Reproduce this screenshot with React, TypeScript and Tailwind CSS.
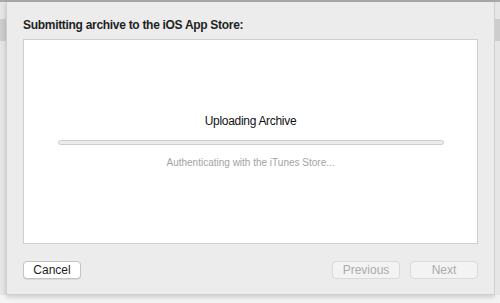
import React from 'react';

const font = { fontFamily: '"Liberation Sans", Arial, sans-serif' };

const SideStrip = ({ width }: { width: string }) => (
  <div className={`flex ${width} flex-col bg-[#e6e6e6]`}>
    <div className="h-[17px]" />
    <div className="h-[22px] bg-[#cdcdcd]" />
  </div>
);

const SheetButton = ({ label, disabled, width }: { label: string; disabled?: boolean; width: string }) => (
  <button
    className={`${width} h-[18px] rounded-[4px] border text-[12px] leading-[16px] ${
      disabled ? 'border-[#dadada] bg-[#f3f3f3] text-[#ababab]' : 'border-[#c3c3c3] bg-white text-[#1e1e1e] shadow-[0_0.5px_0.5px_rgba(0,0,0,0.15)]'
    }`}
  >
    {label}
  </button>
);

export default function App() {
  return (
    <div className="flex h-[303px] w-[500px] flex-col overflow-hidden bg-[#f4f4f4]" style={font}>
      <div className="h-[2px] bg-[#a9a9a9]" />
      <div className="flex">
        <SideStrip width="w-[6px]" />
        <div className="flex h-[293px] flex-1 flex-col border-x border-b border-[#cfcfcf] bg-[#ececec] px-[16px] shadow-[0_2px_5px_rgba(0,0,0,0.18)]">
          <div className="pt-[16px] text-[12px] font-bold leading-[15px] tracking-[-0.3px] text-[#1f1f1f]">
            Submitting archive to the iOS App Store:
          </div>
          <div className="mt-[6px] flex h-[205px] flex-col items-center border border-[#cfcfcf] bg-white">
            <div className="mt-[74px] text-[12px] leading-[15px] tracking-[-0.3px] text-[#111]">Uploading Archive</div>
            <div className="mt-[11px] h-[5px] w-[386px] rounded-full border border-[#cdcdcd] bg-[#ebebeb]" />
            <div className="mt-[11px] text-[10px] leading-[13px] text-[#a3a3a3]">Authenticating with the iTunes Store...</div>
          </div>
          <div className="mt-[17px] flex items-center">
            <SheetButton label="Cancel" width="w-[58px]" />
            <div className="flex-1" />
            <SheetButton label="Previous" disabled width="w-[68px]" />
            <div className="w-[10px]" />
            <SheetButton label="Next" disabled width="w-[68px]" />
          </div>
        </div>
        <SideStrip width="w-[5px]" />
      </div>
    </div>
  );
}
